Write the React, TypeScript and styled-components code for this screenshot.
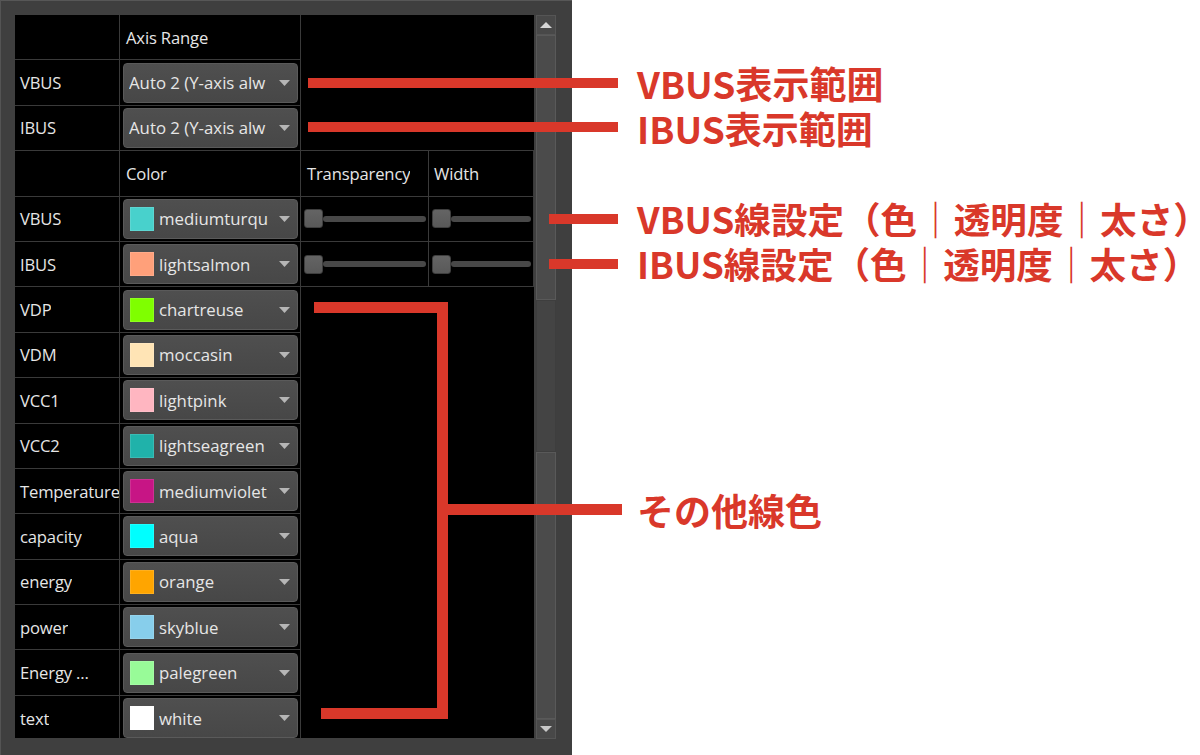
import React from "react";
import styled, { createGlobalStyle } from "styled-components";

const GlobalStyle = createGlobalStyle`
  html, body { margin: 0; padding: 0; background: #ffffff; }
  body {
    width: 1200px;
    height: 755px;
    overflow: hidden;
    font-family: "Open Sans", "Noto Sans", sans-serif;
  }
`;

const Stage = styled.div`
  position: relative;
  width: 1200px;
  height: 755px;
  background: #ffffff;
`;

const Panel = styled.div`
  width: 572px;
  height: 755px;
  box-sizing: border-box;
  background: #3f3f3f;
  border-top: 1px solid #575757;
  border-left: 1px solid #545454;
  padding: 14px 16px 0 14px;
  display: flex;
  align-items: flex-start;
  gap: 2px;
`;

const View = styled.div`
  width: 519px;
  height: 723px;
  background: #000000;
  overflow: hidden;
`;

const Grid = styled.div`
  display: grid;
  grid-template-columns: 105px 181px 128px 105px;
  grid-auto-rows: 45.4px;
`;

const Cell = styled.div<{ $span?: number; $bottom?: boolean; $bare?: boolean }>`
  box-sizing: border-box;
  grid-column: span ${(p) => p.$span ?? 1};
  border-right: ${(p) => (p.$bare ? "none" : "1px solid #3a3a3a")};
  border-bottom: ${(p) => (p.$bare && !p.$bottom ? "none" : "1px solid #3a3a3a")};
  display: flex;
  align-items: center;
  min-width: 0;
`;

const Label = styled.span<{ $pad?: number }>`
  padding-left: ${(p) => p.$pad ?? 5}px;
  color: #e6e6e6;
  font-size: 16.6px;
  letter-spacing: -0.15px;
  white-space: nowrap;
  overflow: hidden;
`;

const Combo = styled.div`
  flex: 1;
  min-width: 0;
  height: 40px;
  margin: 0 2px 0 3px;
  box-sizing: border-box;
  border: 1px solid #5a5a5a;
  border-radius: 4px;
  background: linear-gradient(#4f4f4f, #474747);
  display: flex;
  align-items: center;
  padding: 0 7px 0 5px;
  gap: 5px;
`;

const Swatch = styled.span<{ $c: string }>`
  flex: none;
  width: 24px;
  height: 24px;
  margin-left: 1px;
  box-sizing: border-box;
  border: 1px solid rgba(255, 255, 255, 0.12);
  background: ${(p) => p.$c};
`;

const ComboText = styled.span`
  flex: 1;
  min-width: 0;
  color: #e6e6e6;
  font-size: 16.8px;
  white-space: nowrap;
  overflow: hidden;
`;

const Slider = styled.div`
  flex: 1;
  height: 19px;
  margin: 0 2px 0 3px;
  display: flex;
  align-items: center;
`;

const Handle = styled.span`
  flex: none;
  width: 19px;
  height: 19px;
  box-sizing: border-box;
  border: 1px solid #3e3e3e;
  border-radius: 3px;
  background: linear-gradient(#646464, #595959);
`;

const Groove = styled.span`
  flex: 1;
  height: 6px;
  border-radius: 3px;
  background: #484848;
`;

const Scroll = styled.div`
  width: 20px;
  height: 724px;
  display: flex;
  flex-direction: column;
`;

const ScrollButton = styled.div<{ $h: number }>`
  height: ${(p) => p.$h}px;
  box-sizing: border-box;
  border: 1px solid #555555;
  background: #484848;
  display: flex;
  align-items: center;
  justify-content: center;
`;

const ScrollBlock = styled.div<{ $h: number; $light?: boolean }>`
  height: ${(p) => p.$h}px;
  box-sizing: border-box;
  border: 1px solid ${(p) => (p.$light ? "#595959" : "#3e3e3e")};
  background: ${(p) => (p.$light ? "#4b4b4b" : "#444444")};
`;

const Callout = styled.div<{ $cy: number }>`
  position: absolute;
  left: 637px;
  top: ${(p) => p.$cy - 18}px;
  height: 36px;
  line-height: 36px;
  font-family: "Noto Sans CJK JP", "Noto Sans", sans-serif;
  font-weight: 700;
  font-size: 37px;
  color: #d9382a;
  white-space: nowrap;
`;

const LongCallout = styled(Callout)`
  font-size: 36.6px;
`;

const Overlay = styled.svg`
  position: absolute;
  left: 0;
  top: 0;
  pointer-events: none;
`;

const Arrow = ({ up }: { up?: boolean }) => (
  <svg width="12" height="6" viewBox="0 0 12 6">
    <polygon points={up ? "0,6 12,6 6,0" : "0,0 12,0 6,6"} fill={up ? "#d6d6d6" : "#c8c8c8"} />
  </svg>
);

const DropArrow = () => (
  <svg width="11" height="6" viewBox="0 0 11 6">
    <polygon points="0,0 11,0 5.5,6" fill="#b6b6b6" />
  </svg>
);

const colorRows: [string, string, string][] = [
  ["VDP", "#7fff00", "chartreuse"],
  ["VDM", "#ffe4b5", "moccasin"],
  ["VCC1", "#ffb6c1", "lightpink"],
  ["VCC2", "#20b2aa", "lightseagreen"],
  ["Temperature", "#c71585", "mediumviolet"],
  ["capacity", "#00ffff", "aqua"],
  ["energy", "#ffa500", "orange"],
  ["power", "#87ceeb", "skyblue"],
  ["Energy ...", "#98fb98", "palegreen"],
  ["text", "#ffffff", "white"],
];

const ColorCombo = ({ c, name }: { c: string; name: string }) => (
  <Combo>
    <Swatch $c={c} />
    <ComboText>{name}</ComboText>
    <DropArrow />
  </Combo>
);

const SliderCtl = () => (
  <Slider>
    <Handle />
    <Groove />
  </Slider>
);

export default function App() {
  return (
    <Stage>
      <GlobalStyle />
      <Panel>
        <View>
          <Grid>
            <Cell />
            <Cell>
              <Label $pad={6}>Axis Range</Label>
            </Cell>
            <Cell $span={2} $bare />

            <Cell>
              <Label>VBUS</Label>
            </Cell>
            <Cell>
              <Combo>
                <ComboText>Auto 2 (Y-axis alw</ComboText>
                <DropArrow />
              </Combo>
            </Cell>
            <Cell $span={2} $bare />

            <Cell>
              <Label>IBUS</Label>
            </Cell>
            <Cell>
              <Combo>
                <ComboText>Auto 2 (Y-axis alw</ComboText>
                <DropArrow />
              </Combo>
            </Cell>
            <Cell $span={2} $bare $bottom />

            <Cell />
            <Cell>
              <Label $pad={6}>Color</Label>
            </Cell>
            <Cell>
              <Label $pad={6}>Transparency</Label>
            </Cell>
            <Cell>
              <Label $pad={5}>Width</Label>
            </Cell>

            <Cell>
              <Label>VBUS</Label>
            </Cell>
            <Cell>
              <ColorCombo c="#48d1cc" name="mediumturqu" />
            </Cell>
            <Cell>
              <SliderCtl />
            </Cell>
            <Cell>
              <SliderCtl />
            </Cell>

            <Cell>
              <Label>IBUS</Label>
            </Cell>
            <Cell>
              <ColorCombo c="#ffa07a" name="lightsalmon" />
            </Cell>
            <Cell>
              <SliderCtl />
            </Cell>
            <Cell>
              <SliderCtl />
            </Cell>

            {colorRows.map(([label, c, name]) => (
              <React.Fragment key={label}>
                <Cell>
                  <Label>{label}</Label>
                </Cell>
                <Cell>
                  <ColorCombo c={c} name={name} />
                </Cell>
                <Cell $span={2} $bare />
              </React.Fragment>
            ))}
          </Grid>
        </View>
        <Scroll>
          <ScrollButton $h={20}>
            <Arrow up />
          </ScrollButton>
          <ScrollBlock $h={265} $light />
          <ScrollBlock $h={152} />
          <ScrollBlock $h={267} $light />
          <ScrollButton $h={20}>
            <Arrow />
          </ScrollButton>
        </Scroll>
      </Panel>

      <Overlay width="1200" height="755" viewBox="0 0 1200 755">
        <g fill="#d9382a">
          <rect x="308" y="78" width="310" height="10" />
          <rect x="308" y="122" width="310" height="10" />
          <rect x="549" y="214" width="69" height="10" />
          <rect x="549" y="259" width="69" height="10" />
          <rect x="314" y="302" width="134" height="11" />
          <rect x="437" y="302" width="11" height="417" />
          <rect x="321" y="708" width="127" height="11" />
          <rect x="448" y="504" width="174" height="11" />
        </g>
      </Overlay>

      <Callout $cy={83}>VBUS表示範囲</Callout>
      <Callout $cy={128}>IBUS表示範囲</Callout>
      <LongCallout $cy={219}>VBUS線設定（色｜透明度｜太さ）</LongCallout>
      <LongCallout $cy={264}>IBUS線設定（色｜透明度｜太さ）</LongCallout>
      <Callout $cy={510}>その他線色</Callout>
    </Stage>
  );
}
